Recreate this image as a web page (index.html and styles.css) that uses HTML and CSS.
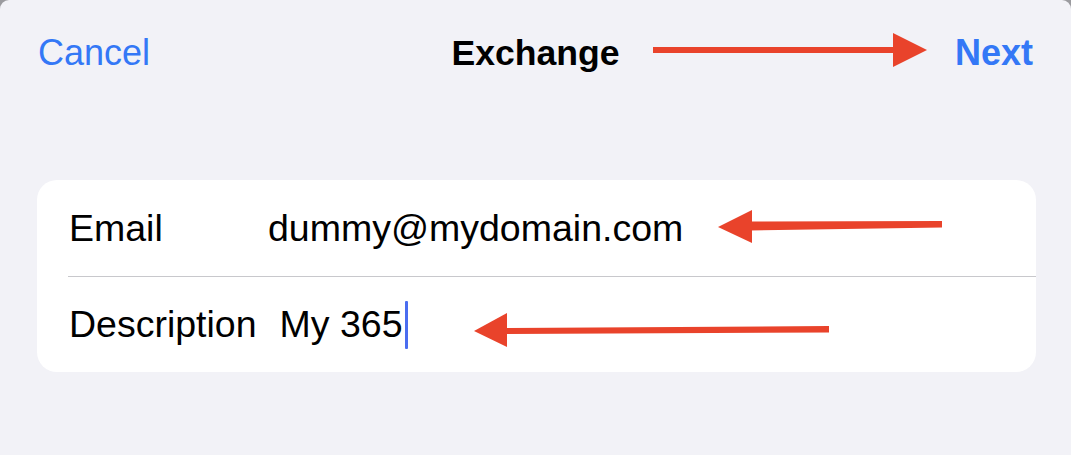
FILE: index.html
```html
<!DOCTYPE html>
<html lang="en">
<head>
<meta charset="utf-8">
<title>Exchange</title>
<link rel="stylesheet" href="styles.css">
</head>
<body>
<div class="sheet">
  <header class="nav">
    <span class="nav-btn cancel">Cancel</span>
    <span class="nav-title">Exchange</span>
    <span class="nav-btn next">Next</span>
  </header>
  <section class="card">
    <div class="row">
      <span class="label label-email">Email</span>
      <span class="value">dummy@mydomain.com</span>
    </div>
    <div class="row row-divided">
      <span class="label">Description</span>
      <span class="value">My 365<span class="caret"></span></span>
    </div>
  </section>
  <svg class="annotations" width="1071" height="455" viewBox="0 0 1071 455" aria-hidden="true">
    <g fill="#e9432b" stroke="none">
      <rect x="653" y="47" width="242" height="6"/>
      <polygon points="893,33 927,50 893,67"/>
      <polygon points="750,221.5 942,221 942,227.5 750,230.5"/>
      <polygon points="752,210 718,227 752,243"/>
      <polygon points="505,328 829,326 829,332.5 505,334"/>
      <polygon points="507,313 474,331 507,347"/>
    </g>
  </svg>
</div>
</body>
</html>
```

FILE: styles.css
```css
* {
  box-sizing: border-box;
}

html, body {
  margin: 0;
  padding: 0;
  background: #9b9b9f;
}

body {
  width: 1071px;
  height: 455px;
  overflow: hidden;
  font-family: "Liberation Sans", Arial, sans-serif;
}

.sheet {
  position: relative;
  width: 1071px;
  height: 455px;
  background: #f2f2f7;
  border-top-left-radius: 9px;
  border-top-right-radius: 9px;
  display: flex;
  flex-direction: column;
}

.nav {
  height: 106px;
  padding: 0 38px 0 38px;
  display: grid;
  grid-template-columns: 1fr auto 1fr;
  align-items: center;
}

.nav-btn {
  color: #3478f6;
  font-size: 36px;
}

.cancel {
  justify-self: start;
}

.next {
  justify-self: end;
  font-weight: 700;
}

.nav-title {
  font-size: 35.6px;
  font-weight: 700;
  color: #000;
}

.card {
  margin: 74px 35px 0 37px;
  background: #ffffff;
  border-radius: 20px;
  padding-left: 31px;
  display: flex;
  flex-direction: column;
}

.row {
  height: 96px;
  display: flex;
  align-items: center;
  gap: 23px;
  padding-left: 1px;
  font-size: 37.5px;
  color: #000;
}

.row-divided {
  border-top: 1px solid #c8c8cc;
}

.label {
  white-space: nowrap;
}

.label-email {
  min-width: 176px;
}

.value {
  white-space: nowrap;
  display: inline-flex;
  align-items: center;
}

.caret {
  display: inline-block;
  width: 3px;
  height: 48px;
  margin-left: 2px;
  background: #4a6df0;
  border-radius: 1px;
}

.annotations {
  position: absolute;
  left: 0;
  top: 0;
  pointer-events: none;
}
```
